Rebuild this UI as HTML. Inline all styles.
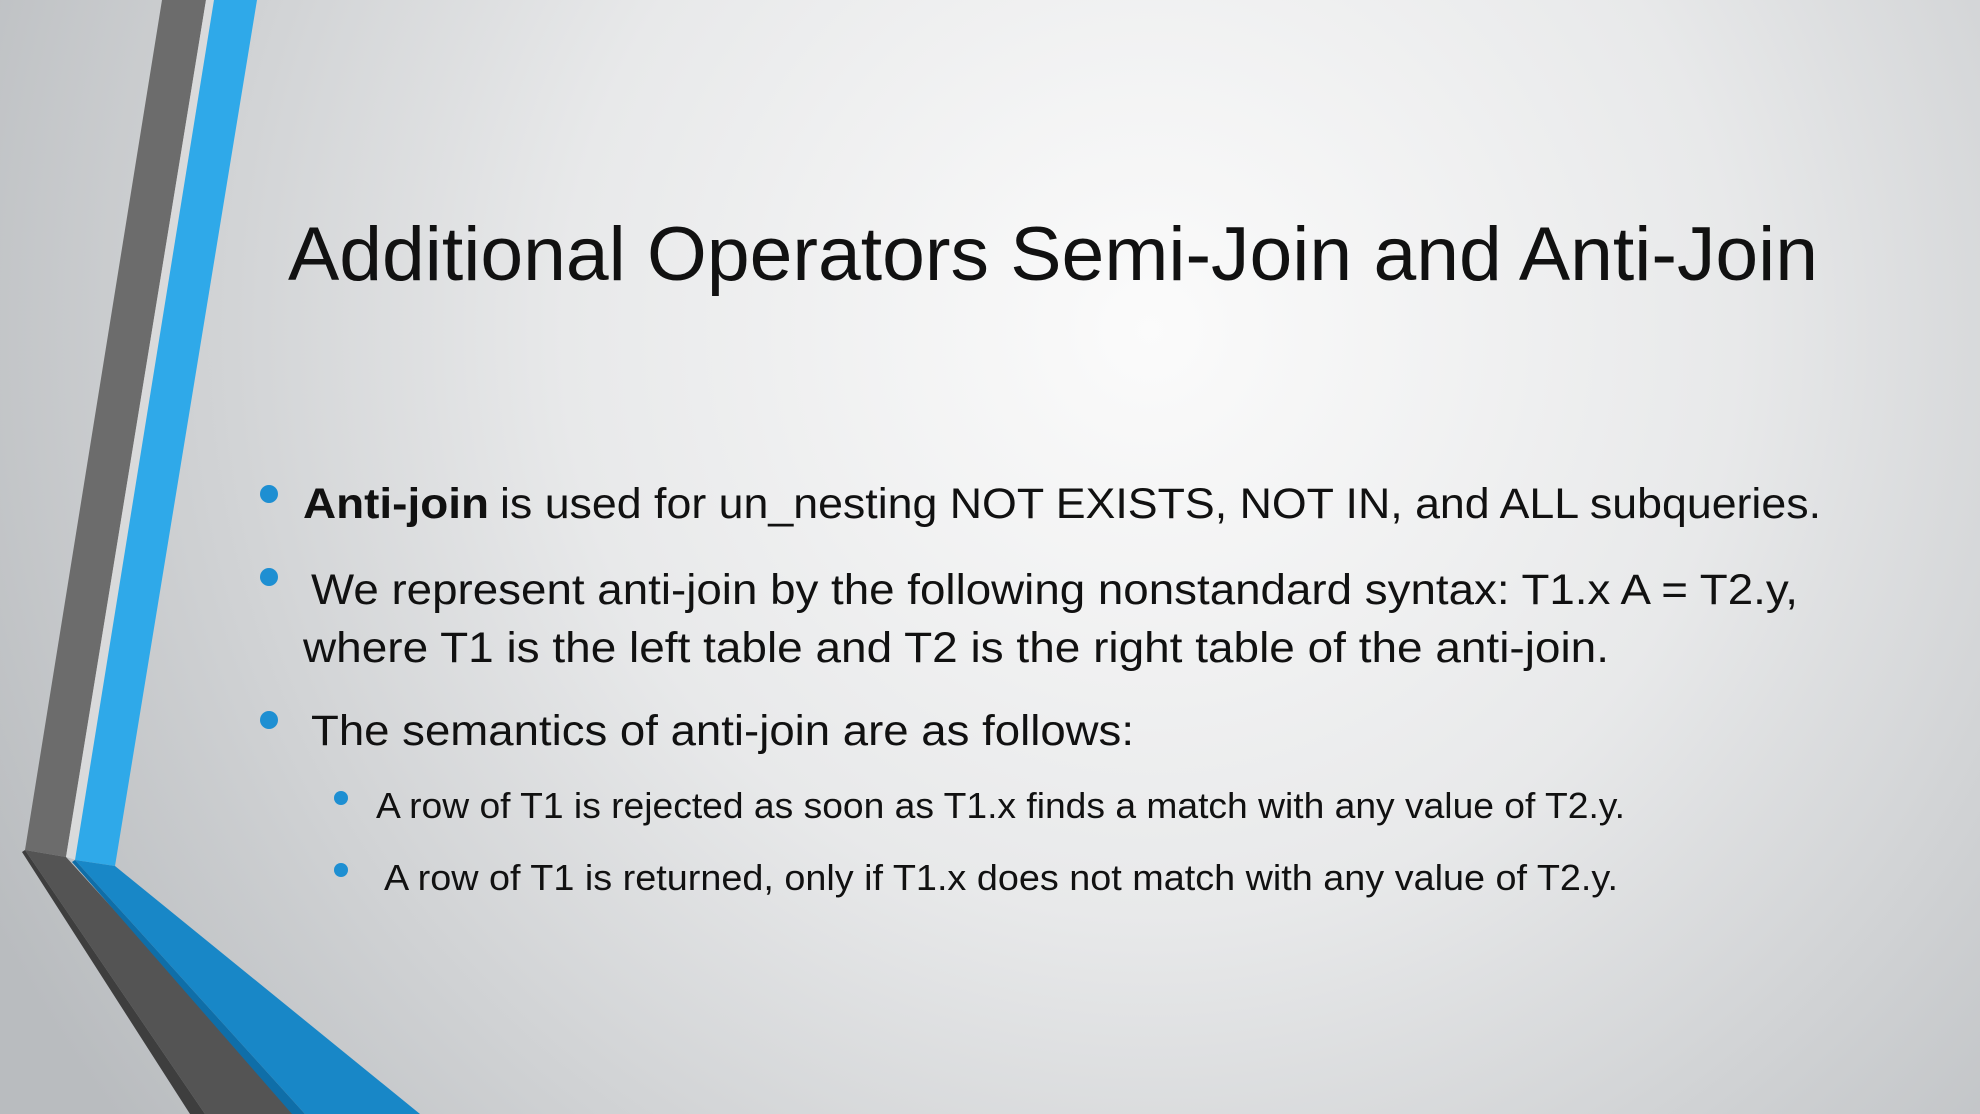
<!DOCTYPE html>
<html><head><meta charset="utf-8"><style>
html,body{margin:0;padding:0;width:1980px;height:1114px;overflow:hidden}
svg{display:block}
text{font-family:"Liberation Sans",sans-serif;fill:#111}
</style></head><body>
<svg width="1980" height="1114" viewBox="0 0 1980 1114" xmlns="http://www.w3.org/2000/svg">
<defs>
<radialGradient id="bg" cx="1150" cy="330" r="1300" gradientUnits="userSpaceOnUse">
<stop offset="0" stop-color="#fbfbfb"/>
<stop offset="0.45" stop-color="#e8e9ea"/>
<stop offset="1" stop-color="#b9bcbf"/>
</radialGradient>
</defs>
<rect width="1980" height="1114" fill="url(#bg)"/>
<!-- gray band -->
<polygon points="162,0 206,0 66,857 25,850" fill="#6c6c6c"/>
<polygon points="25,850 66,857 300,1114 205,1114" fill="#545454"/>
<polygon points="25,850 205,1114 190,1114 22,852" fill="#3e3e3e"/>
<!-- light gap -->
<polygon points="206,0 214,0 76,860 66,857" fill="#d9dadb"/>
<!-- blue band -->
<polygon points="214,0 257,0 115,866 75,860" fill="#2fa9e9"/>
<polygon points="75,860 115,866 420,1114 305,1114" fill="#1887c7"/>
<polygon points="75,860 305,1114 292,1114 72,862" fill="#0f6ea8"/>

<text x="288" y="280" font-size="76" textLength="1530" lengthAdjust="spacingAndGlyphs">Additional Operators Semi-Join and Anti-Join</text>

<g fill="#1e8fd2">
<circle cx="269" cy="494" r="9"/>
<circle cx="269" cy="577" r="9"/>
<circle cx="269" cy="720" r="9"/>
<circle cx="341" cy="798" r="7"/>
<circle cx="341" cy="870" r="7"/>
</g>
<g font-size="43">
<text x="303" y="518" font-weight="bold" textLength="186" lengthAdjust="spacingAndGlyphs">Anti-join</text>
<text x="500" y="518" textLength="1321" lengthAdjust="spacingAndGlyphs">is used for un_nesting NOT EXISTS, NOT IN, and ALL subqueries.</text>
<text x="311" y="604" textLength="1487" lengthAdjust="spacingAndGlyphs">We represent anti-join by the following nonstandard syntax: T1.x A = T2.y,</text>
<text x="303" y="662" textLength="1306" lengthAdjust="spacingAndGlyphs">where T1 is the left table and T2 is the right table of the anti-join.</text>
<text x="311" y="745" textLength="823" lengthAdjust="spacingAndGlyphs">The semantics of anti-join are as follows:</text>
</g>
<g font-size="36">
<text x="376" y="818" textLength="1249" lengthAdjust="spacingAndGlyphs">A row of T1 is rejected as soon as T1.x finds a match with any value of T2.y.</text>
<text x="384" y="890" textLength="1234" lengthAdjust="spacingAndGlyphs">A row of T1 is returned, only if T1.x does not match with any value of T2.y.</text>
</g>
</svg>
</body></html>
